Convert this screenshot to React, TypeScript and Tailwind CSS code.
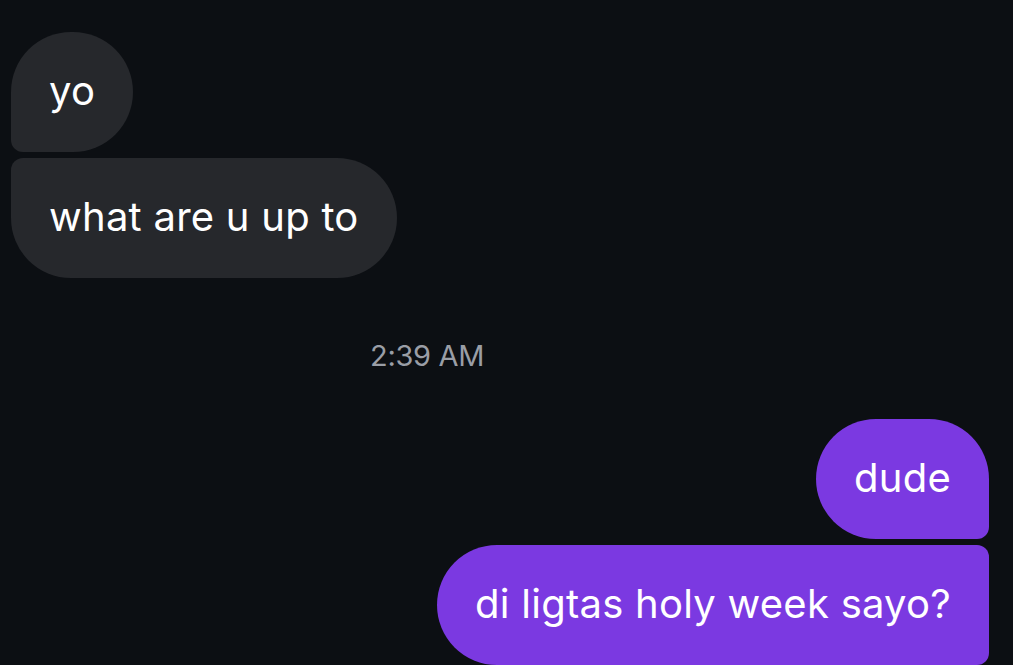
import { FC } from "react";

interface BubbleProps {
  text: string;
  className: string;
}

const Bubble: FC<BubbleProps> = ({ text, className }) => {
  return (
    <div
      className={`h-[120px] flex items-center px-[38px] pb-[3px] text-[40px] tracking-[0.25px] text-white leading-none ${className}`}
    >
      <span>{text}</span>
    </div>
  );
};

export default function App() {
  return (
    <div
      className="w-[1013px] h-[665px] overflow-hidden bg-[#0c0f13] flex flex-col"
      style={{ fontFamily: "Inter, 'Noto Sans', sans-serif" }}
    >
      {/* Incoming */}
      <div className="flex flex-col items-start gap-[6px] pl-[11px] pt-[32px]">
        <Bubble
          text="yo"
          className="bg-[#26282c] rounded-[60px] rounded-bl-[12px]"
        />
        <Bubble
          text="what are u up to"
          className="bg-[#26282c] rounded-[60px] rounded-tl-[12px]"
        />
      </div>

      {/* Timestamp */}
      <div className="pl-[370px] pt-[63px] text-[29px] leading-none text-[#9a9ea6] tracking-[-0.3px]">
        2:39 AM
      </div>

      {/* Outgoing */}
      <div className="flex flex-col items-end gap-[6px] pr-[24px] pt-[49px]">
        <Bubble
          text="dude"
          className="bg-[#7b39e1] rounded-[60px] rounded-br-[12px]"
        />
        <Bubble
          text="di ligtas holy week sayo?"
          className="bg-[#7b39e1] rounded-[60px] rounded-tr-[12px] rounded-br-[12px]"
        />
      </div>
    </div>
  );
}
